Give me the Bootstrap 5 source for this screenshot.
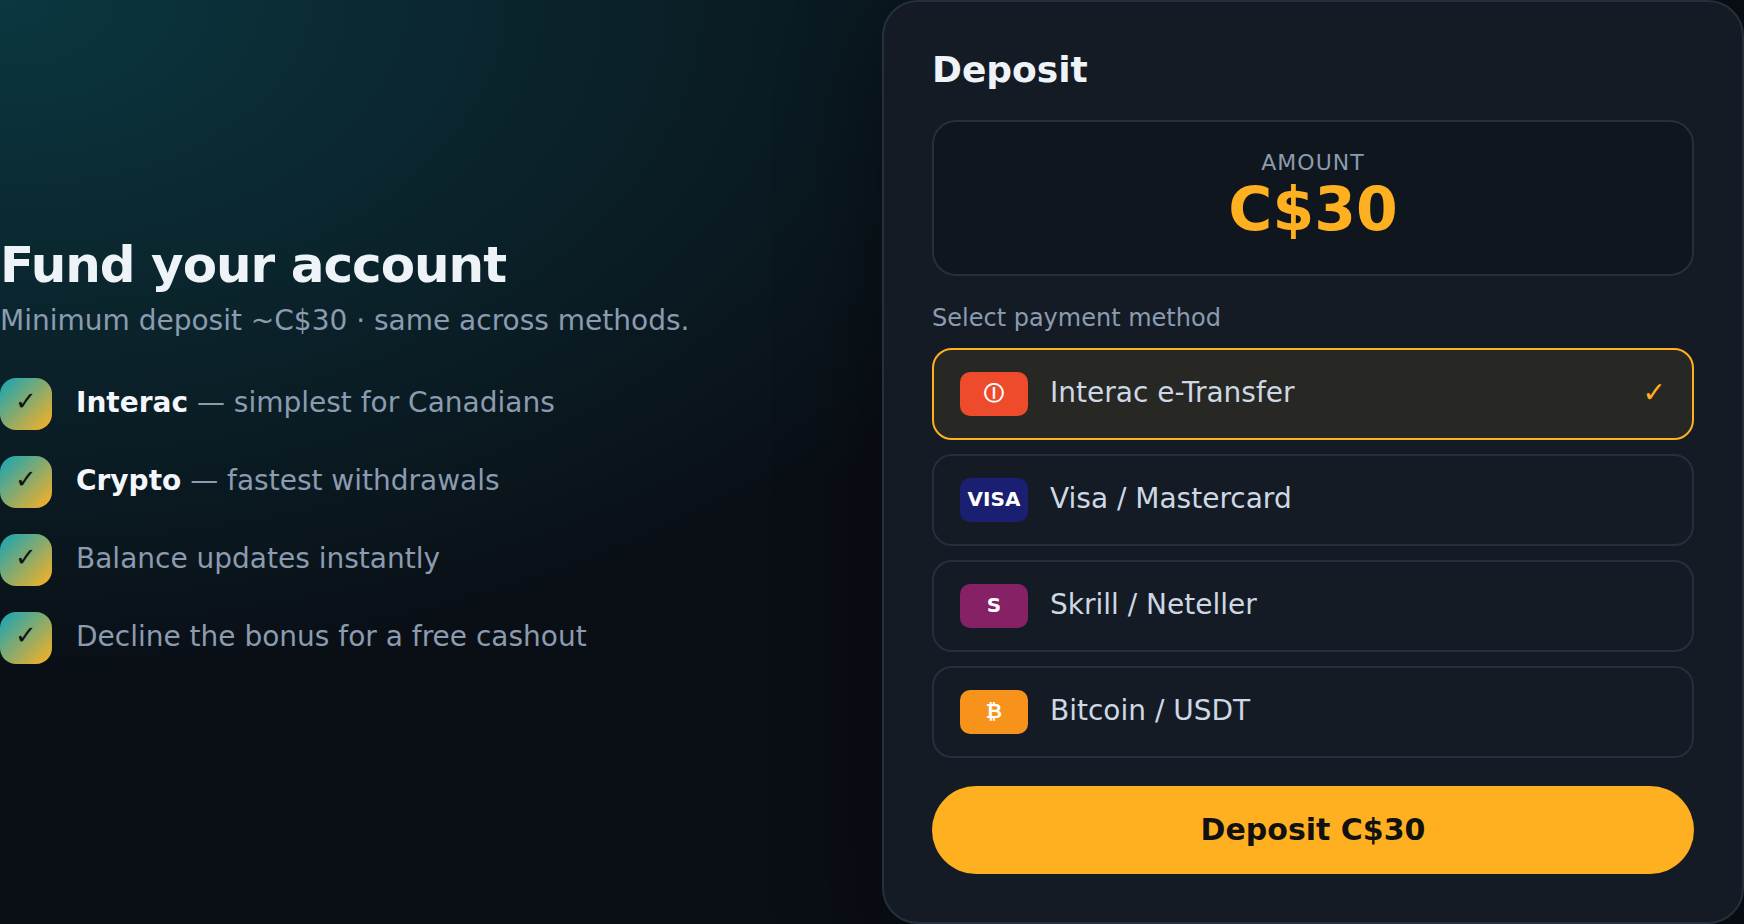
<!DOCTYPE html>
<html lang="en">
<head>
<meta charset="utf-8">
<meta name="viewport" content="width=device-width, initial-scale=1">
<title>Deposit</title>
<link rel="stylesheet" href="https://cdn.jsdelivr.net/npm/bootstrap@5.3.0/dist/css/bootstrap.min.css">
<style>
  body {
    font-family: "DejaVu Sans", sans-serif;
    font-size: 28px;
    line-height: 33px;
    color: #8b9bb0;
    background: #0a0e15;
  }
  .page-grid {
    display: grid;
    grid-template-columns: minmax(0, 1fr) minmax(0, 1fr);
    gap: 20px;
    background: radial-gradient(66% 75% at 0 0, #0b3740, #0a0e15);
  }
  .headline { font-size: 50px; line-height: 62px; letter-spacing: -1px; color: #eef3f8; margin-bottom: 8px; }
  .intro { margin-bottom: 41px; }
  .perk { gap: 24px; margin-bottom: 26px; }
  .perk strong { color: #f3f7fb; }
  .perk-text { padding-bottom: 4px; }
  .perk-tick {
    width: 52px; height: 52px; border-radius: 16px;
    font-size: 26px; line-height: 30px; padding-bottom: 6px; color: #111;
    background: linear-gradient(135deg, #12a5b8, #ffb020);
  }
  .panel {
    padding: 48px; border: 2px solid #262f3c; border-radius: 36px;
    background: #151b24; box-shadow: 0 40px 100px rgba(0, 0, 0, .4);
  }
  .panel-title { font-size: 36px; line-height: 40px; color: #eef3f8; margin-bottom: 30px; }
  .amount-box {
    padding: 28px; border: 2px solid #262f3c; border-radius: 24px;
    background: #0f161e; margin-bottom: 28px;
  }
  .amount-label { font-size: 22px; line-height: 26px; letter-spacing: 1px; }
  .amount-value { font-size: 60px; line-height: 66px; color: #ffb020; margin-bottom: 4px; }
  .methods-title { font-size: 24px; line-height: 28px; margin-bottom: 16px; }
  .methods { gap: 14px; margin-bottom: 28px; }
  .method {
    gap: 22px; padding: 22px 26px; min-height: 92px; cursor: pointer;
    border: 2px solid #262f3c; border-radius: 20px; color: #cdd8e4;
  }
  .method-name { padding-bottom: 3px; }
  .method-tick { color: #ffb020; padding-bottom: 3px; visibility: hidden; }
  .btn-check:checked + .method { border-color: #ffb020; background: #272724; }
  .btn-check:checked + .method .method-tick { visibility: visible; }
  .btn-check:focus-visible + .method { outline: 2px solid #ffb020; outline-offset: 2px; }
  .logo-chip { width: 68px; height: 44px; border-radius: 10px; font-size: 20px; line-height: 24px; padding-bottom: 2px; }
  .chip-interac { background: #ed4b2b; }
  .chip-visa { background: #1a1f71; }
  .chip-skrill { background: #862165; }
  .chip-bitcoin { background: #f7931a; }
  .btn-deposit {
    --bs-btn-bg: #ffb020; --bs-btn-color: #111; --bs-btn-hover-bg: #ffbe47; --bs-btn-hover-color: #111;
    --bs-btn-border-width: 0; --bs-btn-line-height: 36px; --bs-btn-font-size: 30px; --bs-btn-padding-y: 26px;
  }
  @media (max-width: 991px) { .page-grid { grid-template-columns: minmax(0, 1fr); } }
</style>
</head>
<body>
<main class="page-grid min-vh-100 align-items-center overflow-hidden">
  <section>
    <h1 class="headline fw-bold">Fund your account</h1>
    <p class="intro">Minimum deposit ~C$30 · same across methods.</p>
    <ul class="list-unstyled mb-0">
      <li class="perk d-flex align-items-center"><span class="perk-tick d-flex flex-shrink-0 align-items-center justify-content-center">✓</span><span class="perk-text"><strong>Interac</strong> — simplest for Canadians</span></li>
      <li class="perk d-flex align-items-center"><span class="perk-tick d-flex flex-shrink-0 align-items-center justify-content-center">✓</span><span class="perk-text"><strong>Crypto</strong> — fastest withdrawals</span></li>
      <li class="perk d-flex align-items-center"><span class="perk-tick d-flex flex-shrink-0 align-items-center justify-content-center">✓</span><span class="perk-text">Balance updates instantly</span></li>
      <li class="perk d-flex align-items-center"><span class="perk-tick d-flex flex-shrink-0 align-items-center justify-content-center">✓</span><span class="perk-text">Decline the bonus for a free cashout</span></li>
    </ul>
  </section>

  <form class="panel">
    <h2 class="panel-title fw-bold">Deposit</h2>
    <div class="amount-box text-center">
      <div class="amount-label text-uppercase">Amount</div>
      <div class="amount-value fw-bold">C$30</div>
    </div>
    <fieldset>
      <legend class="methods-title">Select payment method</legend>
      <div class="methods d-flex flex-column">
        <div>
          <input class="btn-check" type="radio" name="method" id="m-interac" checked>
          <label class="method d-flex align-items-center" for="m-interac"><span class="logo-chip chip-interac d-flex align-items-center justify-content-center fw-bold text-white">Ⓘ</span><span class="method-name flex-grow-1">Interac e-Transfer</span><span class="method-tick fw-bold">✓</span></label>
        </div>
        <div>
          <input class="btn-check" type="radio" name="method" id="m-visa">
          <label class="method d-flex align-items-center" for="m-visa"><span class="logo-chip chip-visa d-flex align-items-center justify-content-center fw-bold text-white">VISA</span><span class="method-name flex-grow-1">Visa / Mastercard</span></label>
        </div>
        <div>
          <input class="btn-check" type="radio" name="method" id="m-skrill">
          <label class="method d-flex align-items-center" for="m-skrill"><span class="logo-chip chip-skrill d-flex align-items-center justify-content-center fw-bold text-white">S</span><span class="method-name flex-grow-1">Skrill / Neteller</span></label>
        </div>
        <div>
          <input class="btn-check" type="radio" name="method" id="m-bitcoin">
          <label class="method d-flex align-items-center" for="m-bitcoin"><span class="logo-chip chip-bitcoin d-flex align-items-center justify-content-center fw-bold text-white">₿</span><span class="method-name flex-grow-1">Bitcoin / USDT</span></label>
        </div>
      </div>
    </fieldset>
    <button class="btn btn-deposit rounded-pill w-100 fw-bold" type="button">Deposit C$30</button>
  </form>
</main>
<script src="https://cdn.jsdelivr.net/npm/bootstrap@5.3.0/dist/js/bootstrap.bundle.min.js"></script>
</body>
</html>
